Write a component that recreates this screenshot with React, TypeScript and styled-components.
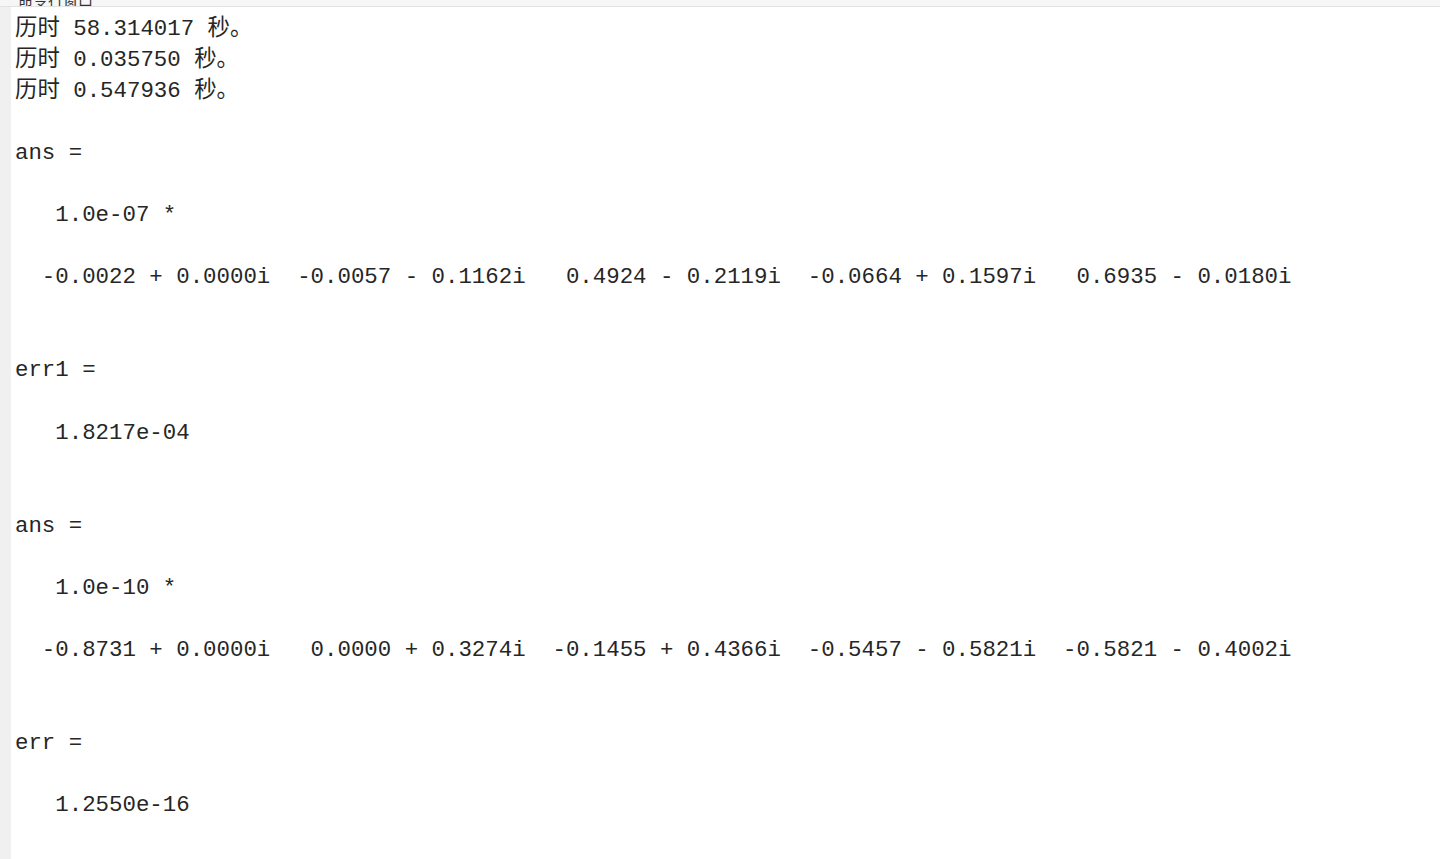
import React from "react";
import styled, { createGlobalStyle } from "styled-components";

const Global = createGlobalStyle`
  html, body { margin: 0; padding: 0; background: #ffffff; }
  body { overflow: hidden; }
`;

const Window = styled.div`
  display: flex;
  flex-direction: column;
  width: 1440px;
  height: 859px;
  background: #ffffff;
  overflow: hidden;
`;

const TitleStrip = styled.div`
  height: 6px;
  flex: none;
  display: flex;
  align-items: flex-end;
  padding-left: 18px;
  background: #f6f6f6;
  border-bottom: 1px solid #e2e2e2;
  overflow: hidden;
`;

const TitleText = styled.span`
  font-family: "Noto Sans CJK SC", "Noto Sans", sans-serif;
  font-size: 15px;
  line-height: 15px;
  color: #333333;
  margin-bottom: -1px;
`;

const Body = styled.div`
  flex: 1;
  display: flex;
  min-height: 0;
`;

const Gutter = styled.div`
  width: 11px;
  flex: none;
  background: #f0f0f0;
`;

const Console = styled.div`
  flex: 1;
  padding: 6.5px 0 0 4px;
  font-family: "Liberation Mono", "Noto Sans CJK SC", monospace;
  font-size: 22.4px;
  line-height: 31.08px;
  color: #262626;
  white-space: pre;
`;

const Line = styled.div`
  height: 31.08px;
`;

const lines: string[] = [
  "历时 58.314017 秒。",
  "历时 0.035750 秒。",
  "历时 0.547936 秒。",
  "",
  "ans =",
  "",
  "   1.0e-07 *",
  "",
  "  -0.0022 + 0.0000i  -0.0057 - 0.1162i   0.4924 - 0.2119i  -0.0664 + 0.1597i   0.6935 - 0.0180i",
  "",
  "",
  "err1 =",
  "",
  "   1.8217e-04",
  "",
  "",
  "ans =",
  "",
  "   1.0e-10 *",
  "",
  "  -0.8731 + 0.0000i   0.0000 + 0.3274i  -0.1455 + 0.4366i  -0.5457 - 0.5821i  -0.5821 - 0.4002i",
  "",
  "",
  "err =",
  "",
  "   1.2550e-16",
  "",
];

export default function App() {
  return (
    <>
      <Global />
      <Window>
        <TitleStrip>
          <TitleText>命令行窗口</TitleText>
        </TitleStrip>
        <Body>
          <Gutter />
          <Console>
            {lines.map((l, i) => (
              <Line key={i}>{l}</Line>
            ))}
          </Console>
        </Body>
      </Window>
    </>
  );
}
